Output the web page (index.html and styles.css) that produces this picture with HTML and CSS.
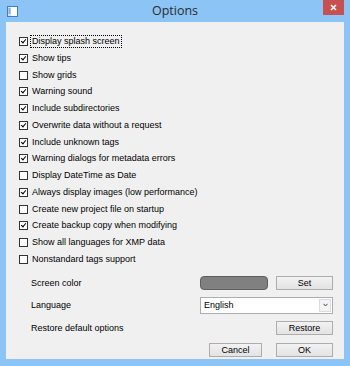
FILE: index.html
```html
<!DOCTYPE html>
<html lang="en">
<head>
    <meta charset="UTF-8">
    <meta name="viewport" content="width=device-width, initial-scale=1.0">
    <title>Options</title>
    <link rel="stylesheet" href="styles.css">
</head>
<body>
    <div class="window">
        <div class="titlebar">
            <svg class="app-icon" width="11" height="11" viewBox="0 0 11 11">
                <rect x="0.5" y="0.5" width="10" height="10" fill="#ffffff" stroke="#3d7fc4"/>
                <rect x="1" y="1" width="3" height="9" fill="#cfe3f7"/>
                <line x1="1.5" y1="3" x2="3.5" y2="3" stroke="#3d7fc4"/>
                <line x1="1.5" y1="5" x2="3.5" y2="5" stroke="#3d7fc4"/>
                <line x1="1.5" y1="7" x2="3.5" y2="7" stroke="#3d7fc4"/>
            </svg>
            <div class="title">Options</div>
            <div class="close-btn">
                <svg width="7" height="7" viewBox="0 0 7 7">
                    <path d="M1 1 L6 6 M6 1 L1 6" stroke="#ffffff" stroke-width="1.6"/>
                </svg>
            </div>
        </div>

        <div class="client">
            <ul class="checks">
                <li class="check on"><span class="box"></span><span class="label focus">Display splash screen</span></li>
                <li class="check on"><span class="box"></span><span class="label">Show tips</span></li>
                <li class="check"><span class="box"></span><span class="label">Show grids</span></li>
                <li class="check on"><span class="box"></span><span class="label">Warning sound</span></li>
                <li class="check on"><span class="box"></span><span class="label">Include subdirectories</span></li>
                <li class="check on"><span class="box"></span><span class="label">Overwrite data without a request</span></li>
                <li class="check on"><span class="box"></span><span class="label">Include unknown tags</span></li>
                <li class="check on"><span class="box"></span><span class="label">Warning dialogs for metadata errors</span></li>
                <li class="check"><span class="box"></span><span class="label">Display DateTime as Date</span></li>
                <li class="check on"><span class="box"></span><span class="label">Always display images (low performance)</span></li>
                <li class="check"><span class="box"></span><span class="label">Create new project file on startup</span></li>
                <li class="check on"><span class="box"></span><span class="label">Create backup copy when modifying</span></li>
                <li class="check"><span class="box"></span><span class="label">Show all languages for XMP data</span></li>
                <li class="check"><span class="box"></span><span class="label">Nonstandard tags support</span></li>
            </ul>

            <div class="settings">
                <div class="setting-label">Screen color</div>
                <div class="swatch"></div>
                <div class="btn">Set</div>

                <div class="setting-label">Language</div>
                <div class="dropdown">
                    <span class="dropdown-value">English</span>
                    <span class="dropdown-arrow">
                        <svg width="5" height="4" viewBox="0 0 5 4">
                            <path d="M0.5 0.8 L2.5 3 L4.5 0.8" stroke="#444444" stroke-width="1" fill="none"/>
                        </svg>
                    </span>
                </div>

                <div class="setting-label">Restore default options</div>
                <div></div>
                <div class="btn">Restore</div>
            </div>

            <div class="footer">
                <div class="btn">Cancel</div>
                <div class="btn">OK</div>
            </div>
        </div>
    </div>
</body>
</html>
```

FILE: styles.css
```css
body {
    margin: 0;
    font-family: 'Liberation Sans', Arial, sans-serif;
    font-size: 9px;
    color: #000;
}
.window {
    width: 350px;
    height: 366px;
    box-sizing: border-box;
    background: #8cc4f5;
    padding: 0 6px 7px 6px;
    display: flex;
    flex-direction: column;
}
.titlebar {
    height: 22px;
    display: grid;
    grid-template-columns: 1fr auto 1fr;
    align-items: start;
}
.app-icon {
    margin: 6px 0 0 1px;
}
.title {
    font-family: 'Open Sans', 'Noto Sans', sans-serif;
    font-size: 12.5px;
    line-height: 22px;
    color: #2b2b2b;
}
.close-btn {
    justify-self: end;
    width: 21px;
    height: 15px;
    background: #c75050;
    display: flex;
    align-items: center;
    justify-content: center;
}
.client {
    flex: 1;
    background: #f0f0f0;
    padding: 15px 11px 0 13px;
    display: flex;
    flex-direction: column;
}
.checks {
    list-style: none;
    margin: 0;
    padding: 0;
}
.check {
    height: 16.77px;
    display: flex;
    align-items: flex-start;
}
.box {
    width: 9px;
    height: 9px;
    box-sizing: border-box;
    border: 1px solid #333;
    background: #fff;
    position: relative;
}
.check.on .box::after {
    content: "";
    position: absolute;
    left: 2px;
    top: 0px;
    width: 2px;
    height: 4px;
    border: solid #000;
    border-width: 0 1.5px 1.5px 0;
    transform: rotate(40deg);
}
.label {
    margin-left: 2px;
    line-height: 9px;
    padding: 0 1px;
    border: 1px solid transparent;
    margin-top: -2px;
    padding-top: 1px;
    padding-bottom: 1px;
}
.label.focus {
    border: 1px dotted #000;
}
.settings {
    margin-top: 4px;
    display: grid;
    grid-template-columns: 1fr 68px 57px;
    column-gap: 8px;
    row-gap: 7px;
    align-items: center;
    padding-left: 12px;
}
.setting-label {
    line-height: 14px;
}
.swatch {
    height: 14px;
    box-sizing: border-box;
    background: #808080;
    border: 1px solid #5f5f5f;
    border-radius: 4px;
}
.btn {
    height: 14px;
    box-sizing: border-box;
    border: 1px solid #adadad;
    background: linear-gradient(#f2f2f2, #e3e3e3);
    text-align: center;
    line-height: 12px;
}
.dropdown {
    grid-column: 2 / 4;
    height: 17px;
    box-sizing: border-box;
    border: 1px solid #abadb3;
    background: #fff;
    display: flex;
    align-items: center;
    justify-content: space-between;
}
.dropdown-value {
    padding-left: 3px;
}
.dropdown-arrow {
    width: 12px;
    height: 13px;
    box-sizing: border-box;
    margin-right: 1px;
    border: 1px solid #dcdcdc;
    background: #f4f4f4;
    display: flex;
    align-items: center;
    justify-content: center;
}
.footer {
    margin-top: 8px;
    display: flex;
    justify-content: flex-end;
    gap: 14px;
}
.footer .btn {
    width: 53px;
}
.footer .btn:last-child {
    width: 57px;
}
```
